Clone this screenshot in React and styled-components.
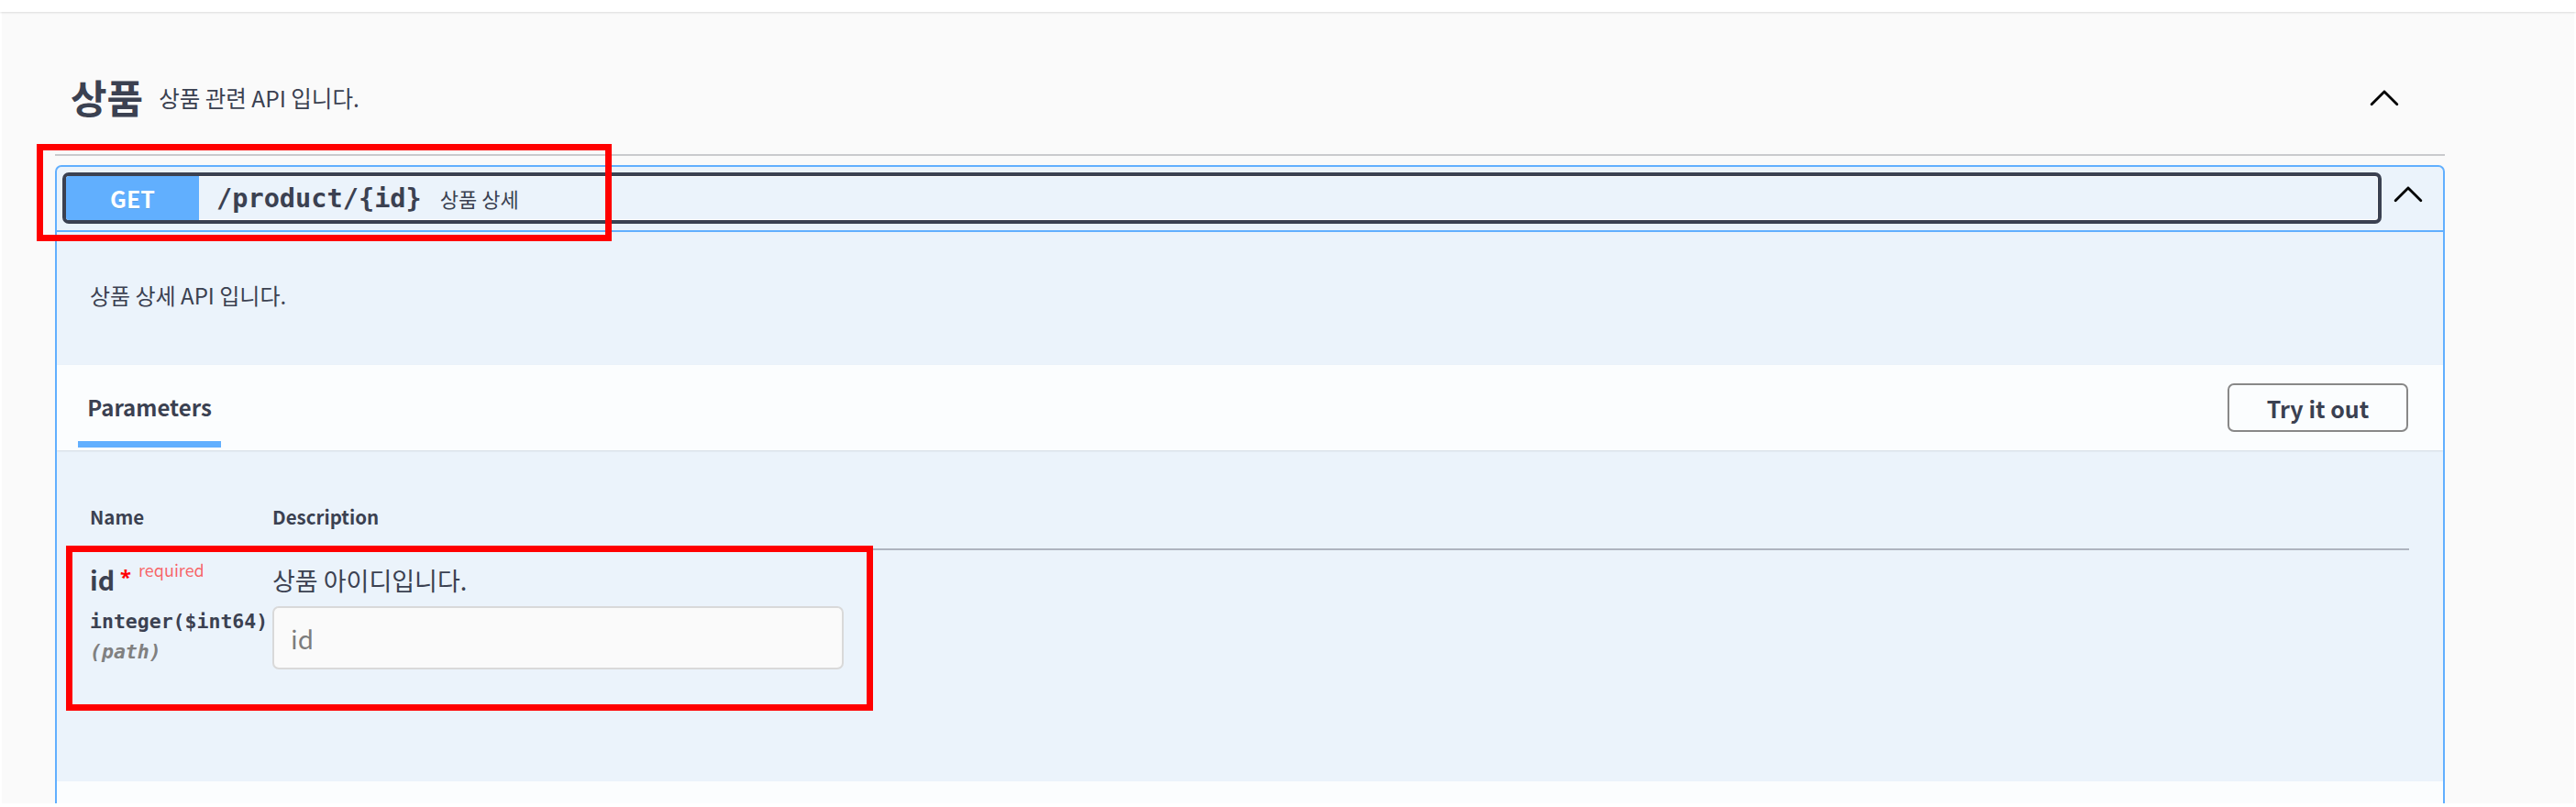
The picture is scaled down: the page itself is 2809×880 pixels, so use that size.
import React from "react";
import styled, { createGlobalStyle } from "styled-components";

const GlobalStyle = createGlobalStyle`
  html, body {
    margin: 0;
    padding: 0;
    background: #ffffff;
    height: 880px;
    overflow: hidden;
  }
  body {
    font-family: "Noto Sans CJK KR", "Noto Sans", sans-serif;
    color: #3b4151;
  }
  * { box-sizing: border-box; }
`;

const Root = styled.div`
  position: relative;
  width: 2809px;
  height: 880px;
`;

const TopBar = styled.div`
  position: relative;
  z-index: 1;
  height: 13px;
  background: #ffffff;
  box-shadow: 0 1px 2px rgba(0, 0, 0, 0.12);
`;

const Wrapper = styled.div`
  margin: 0 2px;
  height: 863px;
  overflow: hidden;
  background: #fafafa;
  padding: 0 141px 0 58px;
`;

const TagHeader = styled.div`
  display: flex;
  align-items: center;
  margin-top: 29px;
  height: 128px;
  padding: 0 46px 0 17px;
  border-bottom: 2px solid #c9cacd;
`;

const TagTitle = styled.h3`
  margin: 0;
  font-size: 43px;
  font-weight: 700;
  line-height: 1;
  color: #3b4151;
`;

const TagDesc = styled.span`
  margin: 4px 0 0 17px;
  font-size: 24.5px;
  line-height: 1;
  color: #3b4151;
`;

const Spacer = styled.div`
  flex: 1;
`;

const ArrowButton = styled.button`
  display: flex;
  padding: 0;
  margin: ${(p) => p.$offset || "0"};
  border: none;
  background: transparent;
  cursor: pointer;
`;

const Opblock = styled.div`
  margin-top: 10px;
  border: 2px solid #61affe;
  border-radius: 7px;
  background: #ebf3fb;
  overflow: hidden;
`;

const Summary = styled.div`
  display: flex;
  align-items: flex-start;
  height: 71px;
  padding: 6px 18px 0 6px;
  border-bottom: 2px solid #61affe;
`;

const SummaryControl = styled.div`
  flex: 1;
  display: flex;
  align-items: center;
  height: 56px;
  border: 4px solid #3b4151;
  border-radius: 7px;
  box-shadow: inset 0 0 0 1px #ffffff;
`;

const Method = styled.span`
  align-self: stretch;
  width: 145px;
  display: flex;
  align-items: center;
  justify-content: center;
  background: #61affe;
  border-radius: 3px 0 0 3px;
  color: #ffffff;
  font-size: 25px;
  font-weight: 700;
  text-shadow: 0 1px 0 rgba(0, 0, 0, 0.1);
`;

const Path = styled.span`
  margin-left: 19px;
  font-family: "DejaVu Sans Mono", monospace;
  font-size: 28.6px;
  font-weight: 700;
  color: #3b4151;
`;

const SummaryText = styled.span`
  margin-left: 20px;
  font-size: 22px;
  color: #3b4151;
`;

const Description = styled.div`
  height: 145px;
  padding: 52px 36px 0;
  font-size: 24px;
  line-height: 1.4;
`;

const TabHeader = styled.div`
  position: relative;
  display: flex;
  align-items: center;
  height: 93px;
  padding: 0 38px 0 23px;
  background: rgba(255, 255, 255, 0.8);
  box-shadow: 0 1px 2px rgba(0, 0, 0, 0.1);
`;

const TabItem = styled.div`
  align-self: stretch;
  width: 156px;
  display: flex;
  align-items: center;
  justify-content: center;
  padding-top: 7px;
  margin-bottom: 3px;
  border-bottom: 7px solid #61affe;
  font-size: 24px;
  font-weight: 700;
`;

const TryButton = styled.button`
  margin-left: auto;
  width: 197px;
  height: 53px;
  border: 2px solid #888888;
  border-radius: 7px;
  background: transparent;
  font-family: "Noto Sans CJK KR", "Noto Sans", sans-serif;
  font-size: 25px;
  font-weight: 700;
  color: #3b4151;
  cursor: pointer;
`;

const TableArea = styled.div`
  height: 361px;
  padding: 36px 37px 0 36px;
`;

const Row = styled.div`
  display: grid;
  grid-template-columns: 199px 1fr;
`;

const HeadRow = styled(Row)`
  height: 73px;
  align-items: center;
  border-bottom: 2px solid #aeb4bf;
  font-size: 20.5px;
  font-weight: 700;
`;

const ParamRow = styled(Row)`
  padding-top: 15px;
`;

const NameCol = styled.div`
  display: flex;
  flex-direction: column;
`;

const NameLine = styled.div`
  display: flex;
  align-items: flex-start;
`;

const ParamName = styled.span`
  font-size: 28.6px;
  font-weight: 700;
  line-height: 1.2;
`;

const Star = styled.span`
  margin: 2px 0 0 6px;
  font-family: "Noto Sans", sans-serif;
  font-size: 22px;
  font-weight: 700;
  line-height: 1;
  color: #ff0000;
`;

const Required = styled.span`
  margin: -3px 0 0 8px;
  font-size: 18px;
  line-height: 1;
  color: rgba(255, 0, 0, 0.6);
`;

const TypeLine = styled.div`
  margin-top: 13px;
  font-family: "DejaVu Sans Mono", monospace;
  font-size: 21.5px;
  font-weight: 700;
  line-height: 1.5;
`;

const InLine = styled.div`
  font-family: "DejaVu Sans Mono", monospace;
  font-size: 21.5px;
  font-weight: 600;
  font-style: italic;
  line-height: 1.5;
  color: #808080;
`;

const DescCol = styled.div`
  display: flex;
  flex-direction: column;
  align-items: flex-start;
`;

const ParamDesc = styled.p`
  margin: 0;
  font-size: 27px;
  line-height: 1.35;
`;

const Input = styled.input`
  margin-top: 10px;
  width: 623px;
  height: 69px;
  padding: 0 18px;
  border: 2px solid #d9d9d9;
  border-radius: 7px;
  background: #fafafa;
  font-family: "Noto Sans CJK KR", "Noto Sans", sans-serif;
  font-size: 28px;
  color: #3b4151;
  outline: none;
  &::placeholder {
    color: #7d7d7d;
  }
`;

const SectionHeader = styled.div`
  height: 60px;
  background: rgba(255, 255, 255, 0.8);
`;

const Highlight = styled.div`
  position: absolute;
  left: ${(p) => p.$x}px;
  top: ${(p) => p.$y}px;
  width: ${(p) => p.$w}px;
  height: ${(p) => p.$h}px;
  border: 7px solid #ff0000;
  pointer-events: none;
`;

const ArrowUp = () => (
  <svg width="40" height="40" viewBox="0 0 20 20" aria-hidden="true">
    <path
      fill="#000"
      d="M17.418 14.908c-.274.28-.722.28-1 0l-6.42-6.42-6.42 6.42c-.277.28-.725.28-1 0-.28-.28-.28-.723 0-1L9.5 6.993c.277-.28.725-.28 1 0l6.918 6.915c.28.277.28.72 0 1z"
    />
  </svg>
);

export default function App() {
  return (
    <Root>
      <GlobalStyle />
      <TopBar />
      <Wrapper>
        <TagHeader>
          <TagTitle>상품</TagTitle>
          <TagDesc>상품 관련 API 입니다.</TagDesc>
          <Spacer />
          <ArrowButton $offset="0 0 0 0">
            <ArrowUp />
          </ArrowButton>
        </TagHeader>
        <Opblock>
          <Summary>
            <SummaryControl>
              <Method>GET</Method>
              <Path>/product/{"{id}"}</Path>
              <SummaryText>상품 상세</SummaryText>
            </SummaryControl>
            <ArrowButton $offset="2px 0 0 9px">
              <ArrowUp />
            </ArrowButton>
          </Summary>
          <Description>상품 상세 API 입니다.</Description>
          <TabHeader>
            <TabItem>Parameters</TabItem>
            <TryButton>Try it out</TryButton>
          </TabHeader>
          <TableArea>
            <HeadRow>
              <span>Name</span>
              <span>Description</span>
            </HeadRow>
            <ParamRow>
              <NameCol>
                <NameLine>
                  <ParamName>id</ParamName>
                  <Star>*</Star>
                  <Required>required</Required>
                </NameLine>
                <TypeLine>integer($int64)</TypeLine>
                <InLine>(path)</InLine>
              </NameCol>
              <DescCol>
                <ParamDesc>상품 아이디입니다.</ParamDesc>
                <Input type="text" placeholder="id" />
              </DescCol>
            </ParamRow>
          </TableArea>
          <SectionHeader />
        </Opblock>
      </Wrapper>
      <Highlight $x={40} $y={157} $w={627} $h={106} />
      <Highlight $x={72} $y={595} $w={880} $h={180} />
    </Root>
  );
}
